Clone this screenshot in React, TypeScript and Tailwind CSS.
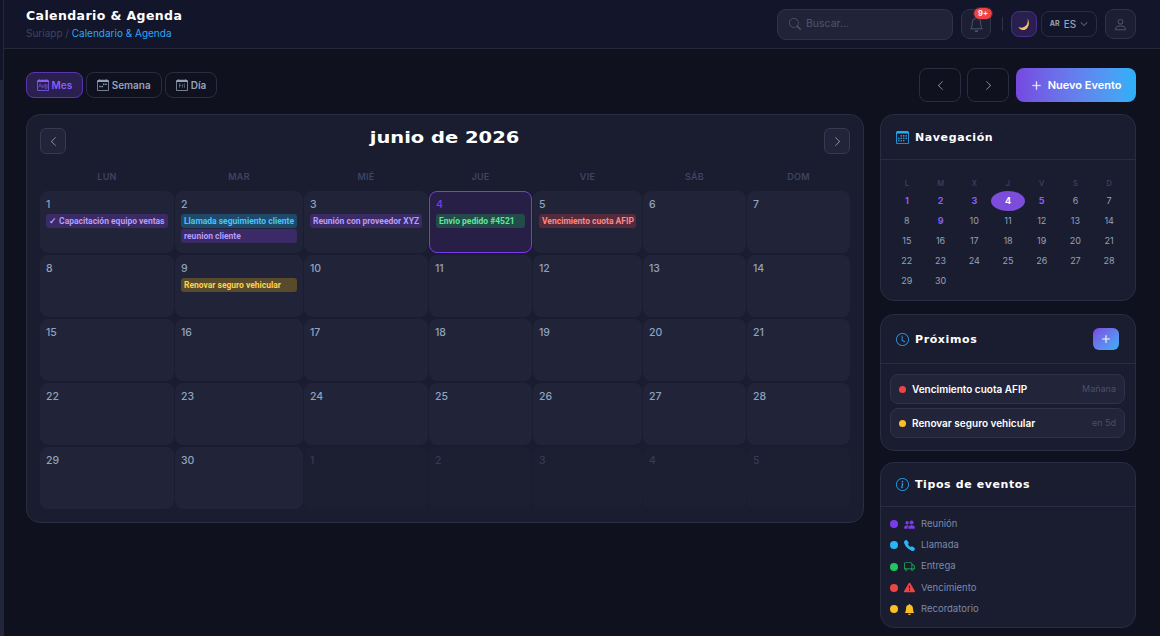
import {
  BsBell,
  BsBellFill,
  BsCalendar3,
  BsCalendarDay,
  BsCalendarMonth,
  BsCalendarWeek,
  BsChevronDown,
  BsChevronLeft,
  BsChevronRight,
  BsClock,
  BsExclamationTriangleFill,
  BsInfoCircle,
  BsPeopleFill,
  BsPerson,
  BsPlusLg,
  BsSearch,
  BsTelephoneFill,
  BsTruck,
} from "react-icons/bs";

const BODY = "font-['Inter','Liberation_Sans',sans-serif]";
const DISPLAY = "font-['DejaVu_Sans','Liberation_Sans',sans-serif]";

type Ev = { label: string; cls: string };

const purple = "bg-[#3a2a66] text-[#b79cf8]";
const events: Record<number, Ev[]> = {
  1: [{ label: "✓ Capacitación equipo ventas", cls: purple }],
  2: [
    { label: "Llamada seguimiento cliente", cls: "bg-[#1d4a6b] text-[#4cc3f7]" },
    { label: "reunion cliente", cls: purple },
  ],
  3: [{ label: "Reunión con proveedor XYZ", cls: purple }],
  4: [{ label: "Envío pedido #4521", cls: "bg-[#234b4a] text-[#5ee89a]" }],
  5: [{ label: "Vencimiento cuota AFIP", cls: "bg-[#552a3b] text-[#fb8a8a]" }],
  9: [{ label: "Renovar seguro vehicular", cls: "bg-[#5a4a2c] text-[#fcd34d]" }],
};

const cells = [
  ...Array.from({ length: 30 }, (_, i) => ({ day: i + 1, muted: false })),
  ...Array.from({ length: 5 }, (_, i) => ({ day: i + 1, muted: true })),
];

const weekdays = ["LUN", "MAR", "MIÉ", "JUE", "VIE", "SÁB", "DOM"];
const miniHead = ["L", "M", "X", "J", "V", "S", "D"];
const withEvents = [1, 2, 3, 5, 9];

const legend = [
  { label: "Reunión", dot: "bg-[#7c3aed]", icon: <BsPeopleFill className="text-[#7c3aed]" /> },
  { label: "Llamada", dot: "bg-[#29b6f6]", icon: <BsTelephoneFill className="text-[#29b6f6]" /> },
  { label: "Entrega", dot: "bg-[#22c55e]", icon: <BsTruck className="text-[#22c55e]" /> },
  { label: "Vencimiento", dot: "bg-[#ef4444]", icon: <BsExclamationTriangleFill className="text-[#ef4444]" /> },
  { label: "Recordatorio", dot: "bg-[#fbbf24]", icon: <BsBellFill className="text-[#fbbf24]" /> },
];

function Tab({ label, active, icon }: { label: string; active?: boolean; icon: React.ReactNode }) {
  return (
    <button
      className={`flex h-[26px] items-center gap-[3px] rounded-lg border text-[10px] font-semibold ${
        active
          ? "border-[#5b34b0] bg-[#2a2050] px-[9.5px] text-[#8b5cf6]"
          : "border-[#2a2d42] px-[10px] text-[#94a3b8]"
      }`}
    >
      <span className="text-[12px]">{icon}</span>
      {label}
    </button>
  );
}

function Upcoming({ dot, label, when }: { dot: string; label: string; when: string }) {
  return (
    <div className="flex h-[30px] items-center rounded-lg border border-[#2f3349] bg-[#222539] px-2">
      <span className={`h-[7px] w-[7px] rounded-full ${dot}`} />
      <span className="ml-[6px] flex-1 text-[10px] font-semibold text-white">{label}</span>
      <span className="text-[9px] text-[#475069]">{when}</span>
    </div>
  );
}

export default function App() {
  return (
    <div className={`flex h-[636px] w-[1160px] overflow-hidden bg-[#0f111e] ${BODY}`}>
      <div className="flex w-[4px] shrink-0 flex-col">
        <div className="h-[80px] border-r border-[#22263b] bg-[#12142a]" />
        <div className="flex-1 bg-[#22263b]" />
      </div>
      <div className="flex min-w-0 flex-1 flex-col">
        <header className="flex h-[49px] shrink-0 items-center border-b border-[#25283b] bg-[#13152a] pl-[22px] pr-[24px]">
          <div className="flex-1">
            <div className={`text-[12.5px] font-bold leading-[16px] tracking-[0.4px] text-white ${DISPLAY}`}>Calendario &amp; Agenda</div>
            <div className="mt-[3px] text-[10px] leading-[13px] text-[#3d4560]">
              Suriapp / <span className="text-[#29a8f6]">Calendario &amp; Agenda</span>
            </div>
          </div>
          <div className="flex h-[31px] w-[176px] items-center gap-[5px] rounded-[9px] border border-[#2f3349] bg-[#212439] px-[11px] text-[10.5px] text-[#4b5470]">
            <BsSearch className="text-[12px]" />
            Buscar...
          </div>
          <div className="relative ml-2 flex h-[30px] w-[30px] items-center justify-center rounded-[9px] border border-[#2f3349] bg-[#1c1f33] text-[#4b5470]">
            <BsBell className="text-[15px]" />
            <span className="absolute -right-[2px] -top-[2px] rounded-full bg-[#ef4444] px-[4px] text-[7.5px] font-bold leading-[11px] text-white outline outline-[#5a2030]">
              9+
            </span>
          </div>
          <div className="ml-[11px] mr-[8px] h-[14px] w-px bg-[#2f3349]" />
          <div className="flex h-[26px] w-[26px] items-center justify-center rounded-lg border border-[#4a2f8a] bg-[#2a2050]">
            <svg viewBox="0 0 16 16" className="h-[14px] w-[14px]">
              <path d="M12 1.500c1 4 0 8-4 10-2 1-4 1-6.500 0 1.500 2.800 4.300 4 7 3.300 4.800-1.300 6.800-8.300 3.500-13.300z" fill="#fcbf6b" />
            </svg>
          </div>
          <div className="ml-1 flex h-[26px] w-[56px] items-center justify-center gap-1 rounded-lg border border-[#2a2d42] text-[10px] font-medium text-[#94a3b8]">
            <span className="text-[7px] font-bold">AR</span>
            ES
            <BsChevronDown className="text-[8px]" />
          </div>
          <div className="ml-2 flex h-[30px] w-[31px] items-center justify-center rounded-[9px] border border-[#2f3349] bg-[#1c1f33] text-[#4b5470]">
            <BsPerson className="text-[15px]" />
          </div>
        </header>

        <main className="flex gap-4 pl-[22px] pr-[24px] pt-[19px]">
          <div className="w-[838px] shrink-0">
            <div className="flex h-[34px] items-center gap-[3px]">
              <Tab active label="Mes" icon={<BsCalendarMonth />} />
              <Tab label="Semana" icon={<BsCalendarWeek />} />
              <Tab label="Día" icon={<BsCalendarDay />} />
            </div>
            <section className="mt-3 h-[409px] rounded-[14px] border border-[#2a2d42] bg-[#1a1c30] px-[13px] pt-[13px]">
              <div className="flex h-[26px] items-center justify-between">
                <button className="flex h-[26px] w-[26px] items-center justify-center rounded-md border border-[#363a52] bg-[#222539] text-[#94a3b8]">
                  <BsChevronLeft className="text-[11px]" />
                </button>
                <h2 className={`-mt-[6px] inline-block scale-x-[1.3] text-[15px] font-bold text-white ${DISPLAY}`}>junio de 2026</h2>
                <button className="flex h-[26px] w-[26px] items-center justify-center rounded-md border border-[#363a52] bg-[#222539] text-[#94a3b8]">
                  <BsChevronRight className="text-[11px]" />
                </button>
              </div>
              <div className="grid grid-cols-[134px_128px_124px_103px_109px_103px_103px] gap-x-px">
                {weekdays.map((d) => (
                  <div key={d} className="flex h-[37px] items-center justify-center pt-[9px] text-[9px] font-semibold tracking-[0.3px] text-[#3d4560]">
                    {d}
                  </div>
                ))}
              </div>
              <div className="grid grid-cols-[134px_128px_124px_103px_109px_103px_103px] grid-rows-[62px_62px_62px_62px_62px] gap-x-px gap-y-[2px]">
                {cells.map((c, i) => {
                  const today = !c.muted && c.day === 4;
                  return (
                    <div
                      key={i}
                      className={`rounded-lg px-[6px] ${
                        today
                          ? "border border-[#7c3aed] bg-[#271f45] pt-[6px]"
                          : c.muted
                            ? "bg-[#1c1e32] pt-[7px]"
                            : "bg-[#212438] pt-[7px]"
                      }`}
                    >
                      <div
                        className={`text-[10.5px] font-medium leading-[13px] ${
                          today ? "font-bold text-[#7c3aed]" : c.muted ? "text-[#353b54]" : "text-[#8fa3bf]"
                        }`}
                      >
                        {c.day}
                      </div>
                      {!c.muted && (
                        <div className="mt-[3px] flex flex-col gap-[1px]">
                          {(events[c.day] ?? []).map((e) => (
                            <div
                              key={e.label}
                              className={`overflow-hidden whitespace-nowrap rounded-[3px] px-[3px] font-['Roboto',sans-serif] text-[8.5px] font-bold leading-[14px] ${e.cls}`}
                            >
                              {e.label}
                            </div>
                          ))}
                        </div>
                      )}
                    </div>
                  );
                })}
              </div>
            </section>
          </div>

          <div className="w-[256px] shrink-0">
            <div className="flex h-[34px] items-center justify-end gap-[6px]">
              <button className="flex h-[34px] w-[42px] items-center justify-center rounded-lg border border-[#2a2d42] text-[#94a3b8]">
                <BsChevronLeft className="text-[11px]" />
              </button>
              <button className="flex h-[34px] w-[42px] items-center justify-center rounded-lg border border-[#2a2d42] text-[#94a3b8]">
                <BsChevronRight className="text-[11px]" />
              </button>
              <button className="ml-[1px] flex h-[34px] w-[120px] items-center justify-center gap-[6px] rounded-lg bg-gradient-to-r from-[#7548e0] to-[#2bb0f8] text-[11px] font-semibold text-white">
                <BsPlusLg className="stroke-[0.6px] text-[11px]" />
                Nuevo Evento
              </button>
            </div>

            <section className="mt-3 h-[187px] rounded-[14px] border border-[#2a2d42] bg-[#1a1c30]">
              <div className="flex h-[45px] items-center gap-[6px] border-b border-[#2a2d42] px-[15px]">
                <BsCalendar3 className="text-[13px] text-[#29a8f6]" />
                <span className={`mt-[2px] text-[11px] font-bold tracking-[0.6px] text-white ${DISPLAY}`}>Navegación</span>
              </div>
              <div className="grid grid-cols-7 px-[9px] pt-[16px]">
                {miniHead.map((d) => (
                  <div key={d} className="flex h-[15px] items-center justify-center text-[7.5px] font-medium text-[#3d4560]">
                    {d}
                  </div>
                ))}
                {Array.from({ length: 30 }, (_, i) => i + 1).map((d) => (
                  <div
                    key={d}
                    className={`flex h-[20px] items-center justify-center text-[9px] ${
                      d === 4
                        ? "rounded-[50%] bg-[#7c4ddb] font-bold text-white"
                        : withEvents.includes(d)
                          ? "font-bold text-[#8b5cf6]"
                          : "text-[#94a3b8]"
                    }`}
                  >
                    {d}
                  </div>
                ))}
              </div>
            </section>

            <section className="mt-[13px] h-[137px] rounded-[14px] border border-[#2a2d42] bg-[#1a1c30]">
              <div className="flex h-[49px] items-center border-b border-[#2a2d42] pl-[15px] pr-[16px]">
                <BsClock className="text-[13px] text-[#29a8f6]" />
                <span className={`ml-[6px] mt-[2px] flex-1 text-[11px] font-bold tracking-[0.6px] text-white ${DISPLAY}`}>Próximos</span>
                <button className="flex h-[22px] w-[26px] items-center justify-center rounded-md bg-gradient-to-br from-[#7548e0] to-[#2bb0f8] text-white">
                  <BsPlusLg className="stroke-[0.6px] text-[10px]" />
                </button>
              </div>
              <div className="flex flex-col gap-[4px] pl-[9px] pr-[10px] pt-[10px]">
                <Upcoming dot="bg-[#ef4444]" label="Vencimiento cuota AFIP" when="Mañana" />
                <Upcoming dot="bg-[#fbbf24]" label="Renovar seguro vehicular" when="en 5d" />
              </div>
            </section>

            <section className="mt-[11px] h-[166px] rounded-[14px] border border-[#2a2d42] bg-[#1a1c30]">
              <div className="flex h-[44px] items-center gap-[6px] border-b border-[#2a2d42] px-[15px]">
                <BsInfoCircle className="text-[13px] text-[#29a8f6]" />
                <span className={`mt-[2px] text-[11px] font-bold tracking-[0.6px] text-white ${DISPLAY}`}>Tipos de eventos</span>
              </div>
              <div className="flex flex-col gap-[7.25px] px-[9px] pt-[10px]">
                {legend.map((l) => (
                  <div key={l.label} className="flex h-[14px] items-center text-[9.5px] text-[#7b8aa8]">
                    <span className={`h-[8px] w-[8px] rounded-full ${l.dot}`} />
                    <span className="ml-[6px] w-[17px] text-[11px]">{l.icon}</span>
                    {l.label}
                  </div>
                ))}
              </div>
            </section>
          </div>
        </main>
      </div>
    </div>
  );
}
